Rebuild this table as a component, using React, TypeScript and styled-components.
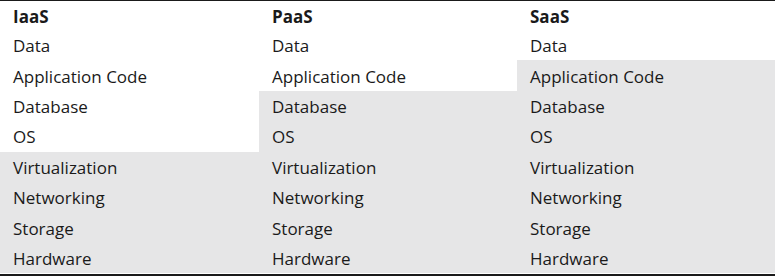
import React from 'react';
import styled, { createGlobalStyle } from 'styled-components'

const GlobalStyle = createGlobalStyle`
body {
  margin: 0;
  background: #ffffff;
}
`

const Table = styled.div`
width: 775px;
border-top: 1.5px solid #1a1a1a;
border-bottom: 2px solid #1a1a1a;
padding-bottom: 1px;
display: grid;
grid-template-columns: 259px 258px 258px;
grid-template-rows: 29px repeat(8, 30.4px);
font-family: "Open Sans", "Liberation Sans", sans-serif;
font-size: 17px;
color: #1a1a1a;
`

const Cell = styled.div<{ $shaded?: boolean; $head?: boolean }>`
display: flex;
align-items: center;
padding-left: 13px;
padding-top: 1px;
background-color: ${p => (p.$shaded ? '#e6e6e7' : '#ffffff')};
font-weight: ${p => (p.$head ? 700 : 400)};
`

const layers = [
  'Data',
  'Application Code',
  'Database',
  'OS',
  'Virtualization',
  'Networking',
  'Storage',
  'Hardware',
]

// index of the first layer the provider manages
const models = [
  { name: 'IaaS', from: 4 },
  { name: 'PaaS', from: 2 },
  { name: 'SaaS', from: 1 },
]

const App = () => {
  return (
    <>
      <GlobalStyle />
      <Table>
        {models.map(m => (
          <Cell key={m.name} $head>{m.name}</Cell>
        ))}
        {layers.map((layer, i) =>
          models.map(m => (
            <Cell key={m.name + layer} $shaded={i >= m.from}>{layer}</Cell>
          ))
        )}
      </Table>
    </>
  );
}

export default App;
